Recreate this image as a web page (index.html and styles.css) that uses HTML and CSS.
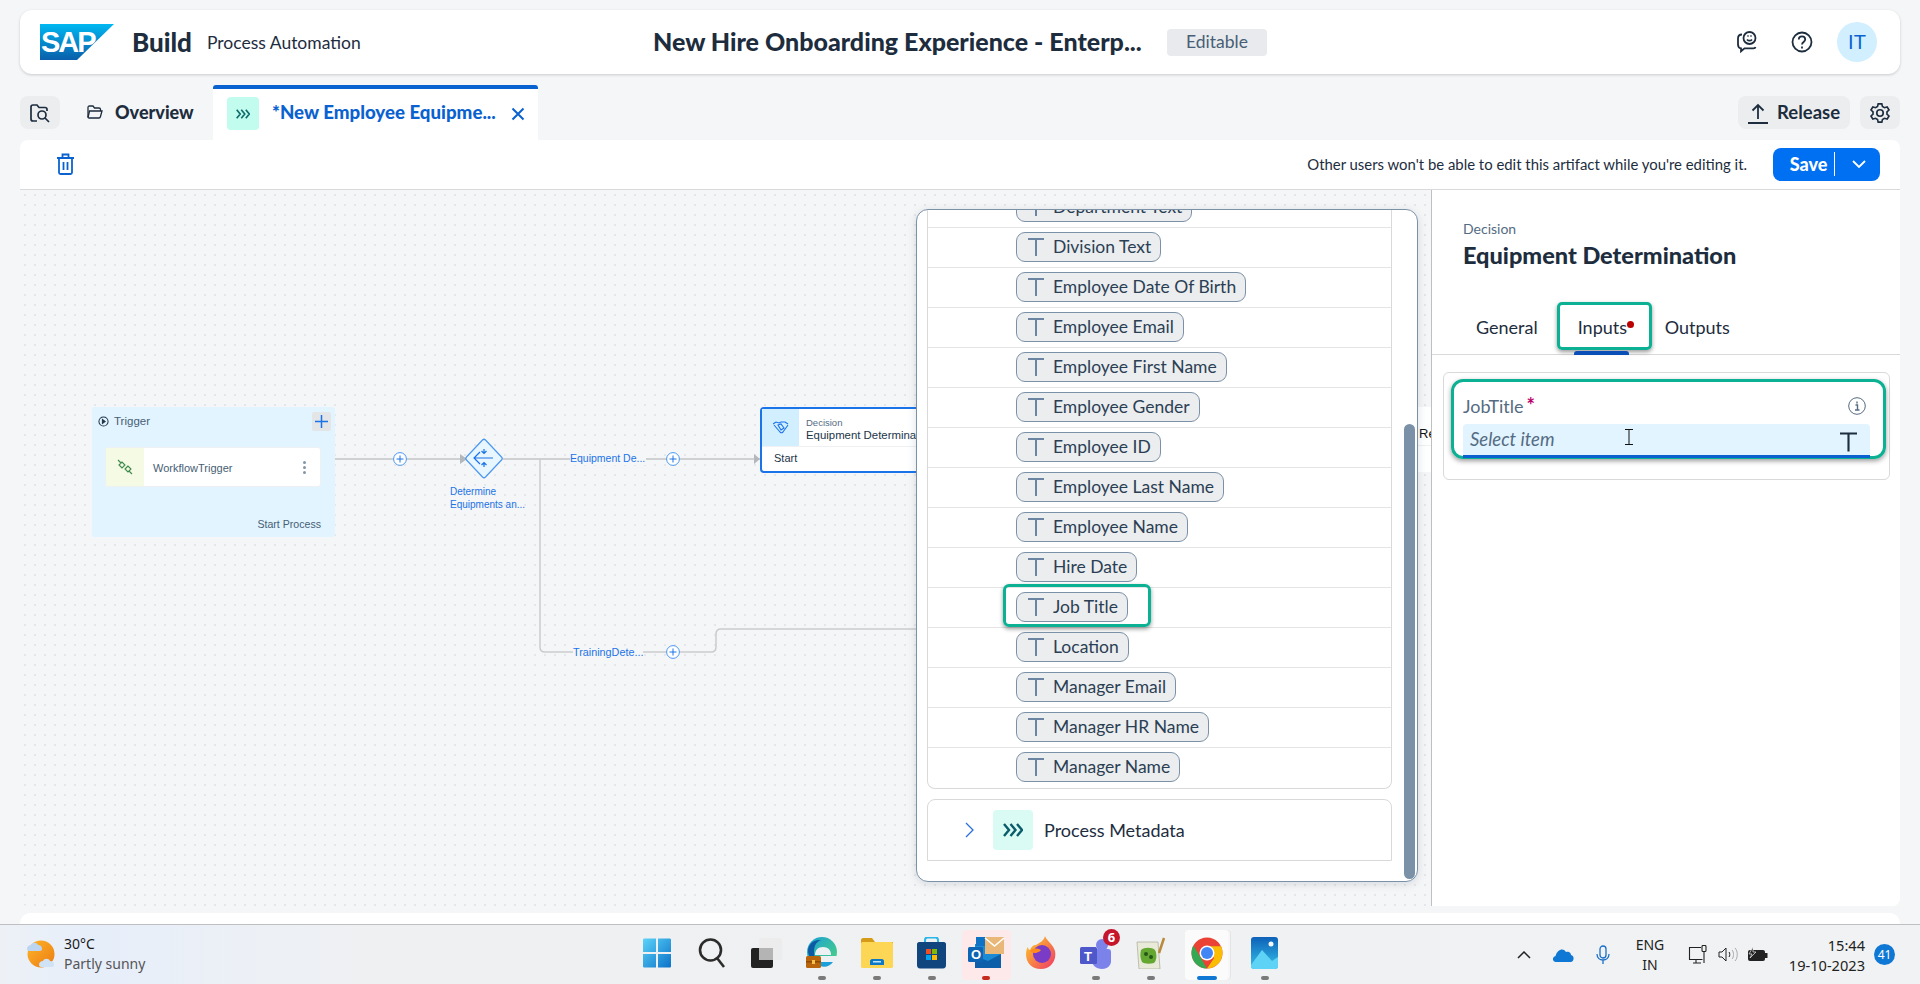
FILE: index.html
```html
<!DOCTYPE html>
<html lang="en">
<head>
    <meta charset="UTF-8">
    <title>SAP Build Process Automation</title>
    <link rel="stylesheet" href="styles.css">
</head>
<body>
    <svg class="defs" width="0" height="0">
        <symbol id="type-t" viewBox="0 0 16 18"><path d="M0 1h16M8 1v17" fill="none" stroke="currentColor" stroke-width="2"/></symbol>
        <symbol id="chevrons" viewBox="0 0 20 14"><path d="M1 1l5 6-5 6M7.500 1l5 6-5 6M14 1l5 6-5 6" fill="none" stroke="currentColor" stroke-width="2.400"/></symbol>
        <symbol id="plus-circle" viewBox="0 0 14 14"><circle cx="7" cy="7" r="6.400" fill="#fff" stroke="#4a97f2" stroke-width="1"/><path d="M3.500 7h7M7 3.500v7" stroke="#1a73e8" stroke-width="1"/></symbol>
    </svg>

    <div class="page">
        <header class="shell">
            <div class="brand">
                <div class="sap-logo"><span>SAP</span></div>
                <span class="brand-build">Build</span>
                <span class="brand-product">Process Automation</span>
            </div>
            <div class="project-title">New Hire Onboarding Experience - Enterp...</div>
            <span class="badge">Editable</span>
            <div class="shell-actions">
                <svg class="shell-icon" viewBox="0 0 24 24" fill="none" stroke="#1d2d3e" stroke-width="1.800">
                    <path d="M7 4.500c-2.500 0-4 1.500-4 4v6c0 2 1 3.500 3 3.800v3l3.500-3h9c1 0 1.800-.4 2-1.300"/>
                    <circle cx="14.500" cy="8" r="6"/>
                    <path d="M12 9.500c1.400 1.600 3.600 1.600 5 0M12.500 6h1M15.500 6h1"/>
                </svg>
                <svg class="shell-icon" viewBox="0 0 24 24" fill="none" stroke="#1d2d3e" stroke-width="1.800">
                    <circle cx="12" cy="12" r="9.500"/>
                    <path d="M8.800 9.500c0-4.200 6.400-4.200 6.400 0 0 2.400-3.200 2.500-3.200 5"/>
                    <path d="M12 16.500v2"/>
                </svg>
                <div class="avatar">IT</div>
            </div>
        </header>

        <nav class="tabbar">
            <button class="square-btn">
                <svg width="22" height="22" viewBox="0 0 22 22" fill="none" stroke="#1d2d3e" stroke-width="1.700">
                    <path d="M8 19H4c-1 0-2-1-2-2V5c0-1 1-2 2-2h4l2 2.500h6c1 0 2 1 2 2V9"/>
                    <circle cx="13" cy="13" r="4"/>
                    <path d="M16 16l4 4"/>
                </svg>
            </button>
            <div class="tab-plain">
                <svg width="16" height="14" viewBox="0 0 16 14" fill="none" stroke="#1d2d3e" stroke-width="1.300">
                    <path d="M1 12V2.500C1 1.500 1.500 1 2.500 1H6l1.500 2H12c1 0 1.500.5 1.500 1.500V6"/>
                    <path d="M1 12.500l1.500-6.500h12.500l-1.500 5.500c-.2.800-.6 1.500-1.500 1.500H2z"/>
                </svg>
                <span>Overview</span>
            </div>
            <div class="tab-active">
                <span class="type-chip"><svg width="14" height="10"><use href="#chevrons"/></svg></span>
                <span class="tab-active-text">*New Employee Equipme...</span>
                <svg class="tab-close" width="14" height="14" viewBox="0 0 14 14" stroke="#0a62d0" stroke-width="2"><path d="M1.500 1.500l11 11M12.500 1.500l-11 11"/></svg>
            </div>
            <div class="tab-actions">
                <button class="release-btn">
                    <svg width="20" height="22" viewBox="0 0 20 22" fill="none" stroke="#1d2d3e" stroke-width="1.800">
                        <path d="M10 17V3M4.500 8.500L10 3l5.500 5.500M0 21h20"/>
                    </svg>
                    <span>Release</span>
                </button>
                <button class="square-btn">
                    <svg width="22" height="24" viewBox="0 0 24 24" fill="none" stroke="#1d2d3e" stroke-width="1.800">
                        <path d="M10 2h4l.7 3 2.100 1.200 3-.9 2 3.400-2.200 2.100v2.400l2.200 2.100-2 3.400-3-.9L14.700 19l-.7 3h-4l-.7-3-2.100-1.200-3 .9-2-3.400 2.200-2.100v-2.400L2.200 8.700l2-3.400 3 .9L9.300 5z"/>
                        <circle cx="12" cy="12" r="3.500"/>
                    </svg>
                </button>
            </div>
        </nav>

        <main class="workspace">
            <div class="toolbar">
                <svg class="trash" width="17" height="22" viewBox="0 0 17 22" fill="none" stroke="#0a62d0" stroke-width="1.800">
                    <path d="M0 5h17M5.500 5V1.500h6V5M2 5v14.500c0 .8.500 1.500 1.500 1.500h10c1 0 1.500-.7 1.500-1.500V5M6.500 9v8M10.500 9v8"/>
                </svg>
                <span class="toolbar-msg">Other users won't be able to edit this artifact while you're editing it.</span>
                <button class="save-btn">
                    <span class="save-label">Save</span>
                    <svg width="14" height="9" viewBox="0 0 14 9" fill="none" stroke="#fff" stroke-width="1.800"><path d="M1 1l6 6 6-6"/></svg>
                </button>
            </div>

            <div class="editor">
                <section class="canvas">
                    <svg class="wires" width="1411" height="716" fill="none">
                        <path d="M315 269h130M483 269h257" stroke="#c2c4c6" stroke-width="1.500"/>
                        <path d="M520 269v188q0 5 5 5h166q5 0 5-5v-13q0-5 5-5h195" stroke="#c9cbcd" stroke-width="1.500"/>
                        <path d="M440 264l7 5-7 5zM734 264l6 5-6 5z" fill="#b4b8bc"/>
                        <path d="M462.500 250q1.500-1.500 3 0l16 17q1.500 1.500 0 3l-16 17q-1.500 1.500-3 0l-16-17q-1.500-1.500 0-3z" fill="#e8f6ff" stroke="#4a97f2" stroke-width="1.200"/>
                        <path d="M454 268h19M460 262l-6 6 6 6M464 259v4M461.500 261l2.500 2.500 2.500-2.500M464 277v-4M461.500 275l2.500-2.500 2.500 2.500" stroke="#1a73e8" stroke-width="1.200"/>
                        <use href="#plus-circle" x="373" y="262" width="14" height="14"/>
                        <use href="#plus-circle" x="646" y="262" width="14" height="14"/>
                        <use href="#plus-circle" x="646" y="455" width="14" height="14"/>
                    </svg>

                    <div class="lane">
                        <div class="lane-head">
                            <svg class="lane-play" width="11" height="11" viewBox="0 0 12 12" fill="none" stroke="#223548" stroke-width="1.100"><circle cx="6" cy="6" r="5"/><path d="M4.800 3.800l3 2.200-3 2.200z" fill="#223548"/></svg>
                            <span class="lane-title">Trigger</span>
                            <span class="lane-plus"><svg width="13" height="13" viewBox="0 0 13 13" stroke="#1a73e8" stroke-width="1.500"><path d="M0 6.500h13M6.500 0v13"/></svg></span>
                        </div>
                        <div class="trigger-card">
                            <div class="trigger-icon">
                                <svg width="16" height="16" viewBox="0 0 16 16" fill="none" stroke="#3d8a4a" stroke-width="1.100">
                                    <path d="M1 1l3 3M12 12l3 3M5 3L2 6l3 3 3-3zM11 7l-3 3 3 3 3-3z"/>
                                </svg>
                            </div>
                            <span class="trigger-name">WorkflowTrigger</span>
                            <span class="kebab"><i></i><i></i><i></i></span>
                        </div>
                        <div class="lane-foot">Start Process</div>
                    </div>

                    <div class="wire-label label-gateway">Determine<br>Equipments an...</div>
                    <div class="wire-label label-equip">Equipment De...</div>
                    <div class="wire-label label-training">TrainingDete...</div>

                    <div class="decision-node">
                        <div class="decision-head">
                            <div class="decision-icon">
                                <svg width="16" height="13" viewBox="0 0 16 13" fill="none" stroke="#1a73e8" stroke-width="1.100">
                                    <path d="M0 3l3-2 3 1 2-1 4 0 3 2M1 4l6 7c1 1 2 1 3 0l5-7M5 4l3-1 3 4-3 2z"/>
                                </svg>
                            </div>
                            <div class="decision-text">
                                <small>Decision</small>
                                <span>Equipment Determination</span>
                            </div>
                        </div>
                        <div class="decision-foot">Start</div>
                    </div>

                    <div class="next-node">
                        <div class="next-head">Re</div>
                    </div>

                    <div class="picker">
                        <div class="field-list">
                            <div class="field-row"><span class="chip"><svg class="chip-t"><use href="#type-t"/></svg>Department Text</span></div>
                            <div class="field-row"><span class="chip"><svg class="chip-t"><use href="#type-t"/></svg>Division Text</span></div>
                            <div class="field-row"><span class="chip"><svg class="chip-t"><use href="#type-t"/></svg>Employee Date Of Birth</span></div>
                            <div class="field-row"><span class="chip"><svg class="chip-t"><use href="#type-t"/></svg>Employee Email</span></div>
                            <div class="field-row"><span class="chip"><svg class="chip-t"><use href="#type-t"/></svg>Employee First Name</span></div>
                            <div class="field-row"><span class="chip"><svg class="chip-t"><use href="#type-t"/></svg>Employee Gender</span></div>
                            <div class="field-row"><span class="chip"><svg class="chip-t"><use href="#type-t"/></svg>Employee ID</span></div>
                            <div class="field-row"><span class="chip"><svg class="chip-t"><use href="#type-t"/></svg>Employee Last Name</span></div>
                            <div class="field-row"><span class="chip"><svg class="chip-t"><use href="#type-t"/></svg>Employee Name</span></div>
                            <div class="field-row"><span class="chip"><svg class="chip-t"><use href="#type-t"/></svg>Hire Date</span></div>
                            <div class="field-row"><span class="chip chip-marked"><svg class="chip-t"><use href="#type-t"/></svg>Job Title</span></div>
                            <div class="field-row"><span class="chip"><svg class="chip-t"><use href="#type-t"/></svg>Location</span></div>
                            <div class="field-row"><span class="chip"><svg class="chip-t"><use href="#type-t"/></svg>Manager Email</span></div>
                            <div class="field-row"><span class="chip"><svg class="chip-t"><use href="#type-t"/></svg>Manager HR Name</span></div>
                            <div class="field-row"><span class="chip"><svg class="chip-t"><use href="#type-t"/></svg>Manager Name</span></div>
                        </div>
                        <div class="meta-row">
                            <svg width="9" height="16" viewBox="0 0 9 16" fill="none" stroke="#2a6fdb" stroke-width="1.300"><path d="M1 1l7 7-7 7"/></svg>
                            <span class="meta-chip"><svg width="20" height="14"><use href="#chevrons"/></svg></span>
                            <span>Process Metadata</span>
                        </div>
                        <div class="picker-scroll"></div>
                    </div>
                </section>

                <aside class="side">
                    <div class="side-head">
                        <small>Decision</small>
                        <h2>Equipment Determination</h2>
                    </div>
                    <div class="side-tabs">
                        <span class="side-tab">General</span>
                        <span class="side-tab side-tab-on">Inputs<i class="red-dot"></i></span>
                        <span class="side-tab">Outputs</span>
                    </div>
                    <div class="input-card">
                        <div class="input-mark">
                            <div class="input-label">
                                <span>JobTitle<b>*</b></span>
                                <svg width="18" height="18" viewBox="0 0 18 18" fill="none" stroke="#556b82" stroke-width="1"><circle cx="9" cy="9" r="8.300"/><path d="M7.500 8h2v5M7 13h4.500M9 4.500v2" stroke-width="1.400"/></svg>
                            </div>
                            <div class="input-box">
                                <span class="placeholder">Select item</span>
                                <svg class="ibeam" width="8" height="16" viewBox="0 0 8 16" fill="none" stroke="#111" stroke-width="1"><path d="M0 .5h8M0 15.500h8M4 .5v15"/></svg>
                                <svg class="input-t" width="17" height="20"><use href="#type-t"/></svg>
                            </div>
                        </div>
                    </div>
                </aside>
            </div>
        </main>
        <div class="strip"></div>
    </div>

    <footer class="taskbar">
        <div class="weather">
            <svg width="32" height="32" viewBox="0 0 32 32">
                <defs>
                    <linearGradient id="sun" x1="0" y1="0" x2="1" y2="1"><stop offset="0" stop-color="#fdb52a"/><stop offset="1" stop-color="#ec7c12"/></linearGradient>
                </defs>
                <circle cx="16" cy="16" r="13.500" fill="url(#sun)"/>
                <path d="M2 11c0-3 2-4 4-4 1-3 6-3 7 0 3 0 4 2 4 4 0 1-1 2-2 2H4c-1 0-2-1-2-2z" fill="#bcd6f2"/>
                <path d="M14 27c0-3 2-4 4-4 1-3 6-3 7 0 3 0 4 2 4 4 0 1-1 2-2 2H16c-1 0-2-1-2-2z" fill="#cfe2f6"/>
            </svg>
            <div class="weather-text"><span>30°C</span><small>Partly sunny</small></div>
        </div>

        <div class="task-icons">
            <span class="task-item">
                <svg width="30" height="30" viewBox="0 0 30 30">
                    <defs><linearGradient id="win" x1="0" y1="0" x2="1" y2="1"><stop offset="0" stop-color="#5cd3f8"/><stop offset="1" stop-color="#0b72c9"/></linearGradient></defs>
                    <path d="M1 2c0-1 .5-1.500 1.500-1.500H14V14H1zM16 .5h11.500c1 0 1.500.5 1.500 1.500V14H16zM1 16h13v13.500H2.500C1.500 29.500 1 29 1 28zM16 16h13v12c0 1-.5 1.500-1.500 1.500H16z" fill="url(#win)"/>
                </svg>
            </span>
            <span class="task-item">
                <svg width="28" height="32" viewBox="0 0 28 32" fill="none" stroke="#2b2b2b" stroke-width="2.600"><circle cx="12.500" cy="13" r="10.500"/><path d="M19 21l7 9"/></svg>
            </span>
            <span class="task-item">
                <svg width="32" height="30" viewBox="0 0 32 30">
                    <rect x="0" y="10" width="22" height="20" rx="2" fill="#222"/>
                    <rect x="8" y="0" width="23" height="22" rx="2" fill="#ececec"/>
                    <rect x="8" y="10" width="14" height="12" fill="#b4b4b4"/>
                </svg>
            </span>
            <span class="task-item task-dot">
                <svg width="31" height="32" viewBox="0 0 31 32">
                    <defs><linearGradient id="edge" x1="0" y1="0" x2="1" y2="1"><stop offset="0" stop-color="#1a9fd8"/><stop offset="1" stop-color="#4fd67a"/></linearGradient></defs>
                    <circle cx="16" cy="15" r="15" fill="url(#edge)"/>
                    <path d="M17 10c6 0 8 4 8 8H9c0-5 3-8 8-8z" fill="#eef1f3"/>
                    <path d="M2 14C2 8 7 2 15 3c-5 2-7 6-7 12 0 4 1 8 4 11-6-2-10-7-10-12z" fill="#0c59a4"/>
                    <path d="M12 19h19c-1 7-8 11-15 11-3 0-4-5-4-11z" fill="#eef1f3"/>
                    <path d="M14 25h13c-3 4-8 6-13 4z" fill="#1a9fd8"/>
                    <rect x="0" y="19" width="15" height="12" rx="1.500" fill="#b8650d"/>
                    <rect x="0" y="24" width="15" height="1.500" fill="#8c4a05"/>
                    <rect x="6" y="23" width="3" height="4" fill="#f5c04d"/>
                </svg>
            </span>
            <span class="task-item task-dot">
                <svg width="32" height="30" viewBox="0 0 32 30">
                    <path d="M0 2c0-1 1-2 2-2h9l3 4h18v6H0z" fill="#d59a16"/>
                    <rect x="0" y="4" width="32" height="26" rx="1.500" fill="#fdd655"/>
                    <path d="M9 27v-4c0-1 1-2 2-2h10c1 0 2 1 2 2v4z" fill="#0f78c6"/>
                    <rect x="12" y="23" width="8" height="1.500" fill="#bfe3fa"/>
                </svg>
            </span>
            <span class="task-item task-dot">
                <svg width="29" height="32" viewBox="0 0 29 32">
                    <path d="M8 5V3c0-1.500 1-2.500 2.500-2.500h8C20 .5 21 1.500 21 3v2" fill="none" stroke="#29b6e8" stroke-width="2"/>
                    <path d="M0 7c0-1 1-2 2-2h25c1 0 2 1 2 2v21c0 2-1 3.500-3 3.500H3c-2 0-3-1.500-3-3.500z" fill="#11457d"/>
                    <rect x="9" y="12" width="5" height="5" fill="#f25022"/><rect x="15" y="12" width="5" height="5" fill="#7fba00"/>
                    <rect x="9" y="18" width="5" height="5" fill="#00a4ef"/><rect x="15" y="18" width="5" height="5" fill="#ffb900"/>
                </svg>
            </span>
            <span class="task-item task-outlook">
                <svg width="36" height="34" viewBox="0 0 36 34">
                    <rect x="7" y="8" width="26" height="24" fill="#1a8ad4"/>
                    <path d="M7 20l13 5 13-7v14H7z" fill="#0c5fa8"/>
                    <rect x="8" y="1" width="11" height="9" fill="#0f72c4"/>
                    <rect x="0" y="11" width="15" height="15" rx="1.500" fill="#0d64b4"/>
                    <text x="3" y="23" class="tb-glyph">O</text>
                    <rect x="17" y="1" width="19" height="17" fill="#e9b878"/>
                    <path d="M17 2l9.500 8L36 2" fill="none" stroke="#fff" stroke-width="1.500"/>
                </svg>
            </span>
            <span class="task-item">
                <svg width="30" height="34" viewBox="0 0 30 34">
                    <defs><linearGradient id="fox" x1="0" y1="0" x2="1" y2="1"><stop offset="0" stop-color="#ffd21e"/><stop offset="1" stop-color="#f0356b"/></linearGradient></defs>
                    <path d="M19 0c1 4 8 8 10 15 2 10-5 18-14 18S0 27 0 18c0-3 1-6 2-7 0 2 1 3 2 3 1-3 3-5 6-5 3-2 8-4 9-9z" fill="url(#fox)"/>
                    <circle cx="16" cy="18" r="9" fill="#7a3bc6"/>
                    <path d="M4 15c3-3 7-3 11-1-1 2-4 2-5 3-2 0-4 0-6-2z" fill="#ff8a1e"/>
                </svg>
            </span>
            <span class="task-item task-dot task-teams">
                <svg width="32" height="32" viewBox="0 0 32 32">
                    <circle cx="22" cy="8" r="6" fill="#7b83eb"/>
                    <path d="M12 12h16c2 0 3 1 3 3v9c0 4-3 8-9 8s-10-4-10-8z" fill="#7b83eb"/>
                    <rect x="0" y="10" width="17" height="17" rx="1.500" fill="#4f58ca"/>
                    <text x="4" y="23.500" class="tb-glyph">T</text>
                </svg>
                <span class="count-badge">6</span>
            </span>
            <span class="task-item task-dot">
                <svg width="30" height="32" viewBox="0 0 30 32">
                    <path d="M1 5h21l2 27H3z" fill="#e9ead8" stroke="#a9aa98" stroke-width=".7"/>
                    <path d="M5 13c3-3 11-3 14 0 2 4 2 10-1 13-4 1-10 1-12-1-2-4-2-8-1-12z" fill="#64a832"/>
                    <circle cx="10" cy="17" r="2" fill="#25551a"/><circle cx="15" cy="20" r="2" fill="#25551a"/>
                    <path d="M23 16L28 1" stroke="#b88a3a" stroke-width="2.500"/>
                </svg>
            </span>
            <span class="task-item task-chrome">
                <svg width="32" height="32" viewBox="0 0 32 32">
                    <circle cx="16" cy="16" r="15.500" fill="#ea4335"/>
                    <path d="M16 31.500C7.500 31.500.5 24.500.5 16c0-3 .8-5.500 2-7.500L11 23z" fill="#34a853"/>
                    <path d="M16 31.500c8.500 0 15.500-7 15.500-15.500 0-2.500-.6-4.700-1.600-6.800H16l7 12z" fill="#fbbc04"/>
                    <circle cx="16" cy="16" r="7.500" fill="#fff"/>
                    <circle cx="16" cy="16" r="6" fill="#4285f4"/>
                </svg>
            </span>
            <span class="task-item task-dot">
                <svg width="27" height="32" viewBox="0 0 27 32">
                    <defs><linearGradient id="pic" x1="0" y1="0" x2="0" y2="1"><stop offset="0" stop-color="#0d61b8"/><stop offset="1" stop-color="#36c1ea"/></linearGradient></defs>
                    <rect x="0" y="0" width="27" height="32" rx="3" fill="url(#pic)"/>
                    <circle cx="20" cy="7" r="2.500" fill="#f2f8fd"/>
                    <path d="M0 28l11-15 10 11 6-4v9c0 2-1 3-3 3H3c-2 0-3-1-3-3z" fill="#5fd3f5"/>
                </svg>
            </span>
        </div>

        <div class="tray">
            <svg width="14" height="8" viewBox="0 0 14 8" fill="none" stroke="#222" stroke-width="1.500"><path d="M1 7l6-6 6 6"/></svg>
            <svg class="tray-cloud" width="21" height="14" viewBox="0 0 21 14"><path d="M3 14c-4 0-4-5-.5-6C4 2 10-1 13 4c4-1 5 2 5 3 4 1 3 7-.5 7z" fill="#0f78d4"/></svg>
            <svg class="tray-mic" width="14" height="20" viewBox="0 0 14 20" fill="none" stroke="#1a6fc9" stroke-width="1.300"><rect x="4" y="1" width="6" height="12" rx="3"/><path d="M1 9c0 8 12 8 12 0M7 15v4"/></svg>
            <div class="tray-lang"><span>ENG</span><span>IN</span></div>
            <svg class="tray-net" width="20" height="20" viewBox="0 0 20 20" fill="none" stroke="#222" stroke-width="1.100"><path d="M13 2.500H1.500v12h13M5 18h8M8 15v3"/><rect x="14" y=".5" width="4" height="6" rx="1"/><path d="M16 6.500V18"/></svg>
            <svg class="tray-vol" width="20" height="15" viewBox="0 0 20 15" fill="none" stroke="#222" stroke-width="1"><path d="M1 5v5h3l4 4V1L4 5z"/><path d="M11 5c1 1 1 4 0 5" /><path d="M14 3c2 2 2 7 0 9M17 1c3 3 3 10 0 13" stroke="#aaa"/></svg>
            <svg class="tray-bat" width="21" height="15" viewBox="0 0 21 15"><rect x="1" y="3" width="17" height="11" rx="2" fill="#222"/><rect x="18" y="6" width="2.500" height="5" fill="#222"/><path d="M6 0L2 7h3l-2 4 6-6H6z" fill="#222" stroke="#f0f1f3" stroke-width=".7"/></svg>
            <div class="tray-clock"><span>15:44</span><span>19-10-2023</span></div>
            <span class="notify">41</span>
        </div>
    </footer>
</body>
</html>
```

FILE: styles.css
```css
* {
    box-sizing: border-box;
}
html, body {
    margin: 0;
    height: 100%;
    overflow: hidden;
}
body {
    display: flex;
    flex-direction: column;
    font-family: Lato, "Noto Sans", sans-serif;
    background-color: #f5f6f7;
    color: #1d2d3e;
}
button {
    font: inherit;
    border: none;
    cursor: pointer;
    color: inherit;
}
.defs {
    position: absolute;
}

.page {
    flex: 1;
    min-height: 0;
    display: flex;
    flex-direction: column;
    padding: 10px 20px 0;
    overflow: hidden;
}

/* shell */
.shell {
    flex: none;
    height: 64px;
    display: flex;
    align-items: center;
    background-color: #fff;
    border-radius: 12px;
    box-shadow: 0 1px 3px rgba(0, 0, 0, .18);
    padding: 0 23px 0 20px;
}
.brand {
    flex: 0 0 613px;
    display: flex;
    align-items: center;
}
.sap-logo {
    width: 74px;
    height: 36px;
    background: linear-gradient(#00b8f1, #0a5fab);
    clip-path: polygon(0 0, 100% 0, 50% 100%, 0 100%);
    display: flex;
    align-items: center;
    font-family: "Liberation Sans", sans-serif;
    font-size: 29px;
    font-weight: bold;
    letter-spacing: -2px;
    color: #fff;
    padding-left: 1px;
}
.brand-build {
    margin-left: 18px;
    font-size: 26px;
    font-weight: 900;
}
.brand-product {
    margin-left: 15px;
    font-size: 17.500px;
}
.project-title {
    width: 490px;
    padding-bottom: 2px;
    font-size: 25px;
    font-weight: 900;
    white-space: nowrap;
}
.badge {
    margin-left: 24px;
    width: 100px;
    height: 27px;
    line-height: 26px;
    text-align: center;
    background-color: #e8eaed;
    color: #475e75;
    border-radius: 4px;
    font-size: 17.500px;
}
.shell-actions {
    margin-left: auto;
    display: flex;
    align-items: center;
    gap: 31px;
}
.shell-icon {
    width: 24px;
    height: 24px;
}
.avatar {
    width: 40px;
    height: 40px;
    border-radius: 50%;
    margin-left: -8px;
    background-color: #d1efff;
    color: #0a62d0;
    text-align: center;
    line-height: 40px;
    font-size: 20px;
    font-family: "Liberation Sans", sans-serif;
}

/* tabs */
.tabbar {
    flex: none;
    height: 55px;
    margin-top: 11px;
    display: flex;
    align-items: flex-start;
}
.square-btn {
    width: 40px;
    height: 33px;
    margin-top: 11px;
    padding: 0;
    display: flex;
    align-items: center;
    justify-content: center;
    border-radius: 8px;
    background-color: #ebedef;
}
.tab-plain {
    margin: 10px 0 0 27px;
    width: 126px;
    height: 33px;
    display: flex;
    align-items: center;
    gap: 12px;
    font-size: 18px;
    font-weight: 900;
}
.tab-active {
    width: 325px;
    height: 55px;
    display: flex;
    align-items: flex-start;
    padding: 8px 13px 0 14px;
    background-color: #fff;
    border-top: 4px solid #0a62d0;
    border-radius: 3px 3px 0 0;
    color: #0a62d0;
}
.type-chip {
    width: 32px;
    height: 33px;
    display: flex;
    align-items: center;
    justify-content: center;
    background-color: #c2fcee;
    border-radius: 4px;
    color: #0f6b6b;
}
.tab-active-text {
    flex: 1;
    margin-left: 13px;
    font-size: 18.700px;
    line-height: 30px;
    font-weight: 900;
    white-space: nowrap;
}
.tab-close {
    margin-top: 10px;
}
.tab-actions {
    margin-left: auto;
    display: flex;
    gap: 10px;
}
.release-btn {
    margin-top: 11px;
    height: 33px;
    width: 112px;
    display: flex;
    align-items: center;
    gap: 9px;
    padding: 0 0 0 10px;
    border-radius: 8px;
    background-color: #ebedef;
    font-size: 18.500px;
    font-weight: 700;
}
.release-btn span {
    margin-top: -2px;
}

/* main panel */
.workspace {
    flex: none;
    height: 766px;
    display: flex;
    flex-direction: column;
    background-color: #fff;
    border-radius: 8px;
    overflow: hidden;
}
.toolbar {
    flex: none;
    height: 50px;
    display: flex;
    align-items: center;
    padding: 0 20px 1px 37px;
    border-bottom: 1px solid #d9d9d9;
}
.toolbar-msg {
    margin-left: auto;
    font-size: 14.900px;
}
.save-btn {
    width: 107px;
    height: 33px;
    margin-left: 26px;
    display: flex;
    align-items: center;
    padding: 0 0 0 10px;
    background-color: #0070f2;
    color: #fff;
    border-radius: 8px;
}
.save-label {
    width: 52px;
    height: 24px;
    line-height: 24px;
    border-right: 1px solid #fff;
    font-size: 18px;
    font-weight: 900;
    margin-right: 17px;
}
.editor {
    flex: 1;
    min-height: 0;
    display: flex;
}

/* canvas */
.canvas {
    position: relative;
    flex: 0 0 1411px;
    overflow: hidden;
    font-family: "Liberation Sans", sans-serif;
    font-size: 11px;
    background-color: #f5f6f7;
    background-image: radial-gradient(#e4e6e9 1px, transparent 1.200px);
    background-size: 10px 10px;
}
.wires {
    position: absolute;
    left: 0;
    top: 0;
}
.lane {
    position: absolute;
    left: 72px;
    top: 217px;
    width: 243px;
    height: 130px;
    display: flex;
    flex-direction: column;
    background-color: #e1f4ff;
    border-radius: 3px;
    color: #475e75;
}
.lane-head {
    display: flex;
    align-items: flex-start;
    height: 40px;
    padding: 5px 4px 0 6px;
    gap: 5px;
}
.lane-play {
    margin-top: 4px;
}
.lane-title {
    font-size: 11.500px;
    line-height: 19px;
}
.lane-plus {
    margin-left: auto;
    width: 19px;
    height: 19px;
    display: flex;
    align-items: center;
    justify-content: center;
    background-color: #e3e5e7;
    border-radius: 2px;
}
.trigger-card {
    margin-left: 13px;
    width: 216px;
    height: 40px;
    display: flex;
    align-items: center;
    background-color: #fff;
    border: 1px solid #eef1f4;
    border-radius: 3px;
}
.trigger-icon {
    width: 38px;
    height: 38px;
    background-color: #f5fae5;
    display: flex;
    align-items: center;
    justify-content: center;
}
.trigger-name {
    margin-left: 9px;
    padding-top: 2px;
    flex: 1;
}
.kebab {
    display: flex;
    flex-direction: column;
    gap: 2px;
    margin-right: 14px;
}
.kebab i {
    width: 3px;
    height: 3px;
    background-color: #8396a8;
    border-radius: 50%;
}
.lane-foot {
    margin-top: auto;
    padding: 0 14px 7px 0;
    font-size: 10.600px;
    text-align: right;
}
.wire-label {
    position: absolute;
    color: #1a73e8;
    line-height: 13px;
    background-color: #f5f6f7;
}
.label-gateway {
    left: 430px;
    top: 295px;
    background: none;
    font-size: 10px;
}
.label-equip {
    left: 550px;
    top: 262px;
    font-size: 10.500px;
    padding-right: 1px;
}
.label-training {
    left: 553px;
    top: 456px;
    font-size: 10.800px;
}
.decision-node {
    position: absolute;
    left: 740px;
    top: 217px;
    width: 300px;
    height: 66px;
    background-color: #fff;
    border: 2px solid #1a73e8;
    border-radius: 4px;
    color: #223548;
}
.decision-head {
    height: 38px;
    display: flex;
    border-bottom: 1px solid #eef0f2;
}
.decision-icon {
    width: 37px;
    background-color: #d1efff;
    display: flex;
    align-items: center;
    justify-content: center;
}
.decision-text {
    display: flex;
    flex-direction: column;
    padding: 7px 0 0 7px;
    line-height: 13px;
    white-space: nowrap;
    font-size: 11.400px;
}
.decision-text small {
    font-size: 9.500px;
    color: #556b82;
}
.decision-foot {
    padding: 5px 0 0 12px;
}
.next-node {
    position: absolute;
    left: 1390px;
    top: 217px;
    width: 40px;
    height: 65px;
    background-color: #fff;
}
.next-head {
    height: 39px;
    padding: 19px 0 0 9px;
    font-size: 13px;
    color: #111;
    border-bottom: 1px solid #eef0f2;
}

/* field picker */
.picker {
    position: absolute;
    left: 896px;
    top: 19px;
    width: 502px;
    height: 673px;
    padding: 0 0 0 10px;
    background-color: #fff;
    border: 1.500px solid #7b91a8;
    border-radius: 12px;
    box-shadow: 0 2px 10px rgba(85, 107, 130, .2);
    overflow: hidden;
    font-family: Lato, "Noto Sans", sans-serif;
}
.field-list {
    width: 465px;
    margin-top: -22px;
    border-left: 1px solid #d9d9d9;
    border-right: 1px solid #d9d9d9;
    border-bottom: 1px solid #d9d9d9;
    border-radius: 0 0 8px 8px;
}
.field-row {
    height: 40px;
    padding: 4px 0 0 88px;
    border-bottom: 1px solid #e5e5e5;
}
.field-row:last-child {
    border-bottom: none;
}
.chip {
    position: relative;
    display: inline-flex;
    align-items: center;
    height: 30px;
    padding: 0 9px 2px 11px;
    background-color: #ebedef;
    border: 1px solid #7b91a8;
    border-radius: 9px;
    font-size: 17.500px;
    color: #2b3f54;
}
.chip-t {
    width: 16px;
    height: 18px;
    margin: 2px 9px 0 0;
    color: #6b84a0;
}
.chip-marked::after {
    content: "";
    position: absolute;
    top: -9px;
    bottom: -6px;
    left: -14px;
    right: -24px;
    border: 3px solid #0cb092;
    border-radius: 6px;
    box-shadow: 0 2px 4px rgba(0, 0, 0, .4);
}
.meta-row {
    width: 465px;
    height: 62px;
    margin-top: 10px;
    display: flex;
    align-items: center;
    padding: 0 0 0 37px;
    border: 1px solid #d9d9d9;
    border-radius: 8px 8px 0 0;
    font-size: 18px;
}
.meta-chip {
    width: 40px;
    height: 40px;
    margin: 0 11px 0 19px;
    display: flex;
    align-items: center;
    justify-content: center;
    background-color: #d9fbf3;
    border-radius: 4px;
    color: #0a5b6b;
}
.picker-scroll {
    position: absolute;
    right: 2px;
    top: 214px;
    width: 11px;
    height: 455px;
    background-color: #7b91a8;
    border-radius: 6px;
}

/* side panel */
.side {
    flex: 1;
    border-left: 1px solid #bdbfc2;
    background-color: #fff;
}
.side-head {
    height: 77px;
    padding: 30px 0 0 31px;
}
.side-head small {
    display: block;
    font-size: 14px;
    color: #556b82;
}
.side-head h2 {
    margin: 4px 0 0;
    font-size: 23.500px;
    font-weight: 900;
}
.side-tabs {
    height: 88px;
    display: flex;
    align-items: flex-start;
    padding: 35px 0 0 44px;
    border-bottom: 1px solid #d9d9d9;
    font-size: 18px;
}
.side-tab {
    height: 48px;
    line-height: 50px;
    margin-right: 19px;
}
.side-tab-on {
    position: relative;
    width: 95px;
    margin-right: 13px;
    padding-left: 18px;
    line-height: 44px;
    border: 3px solid #0cb092;
    border-radius: 5px;
    box-shadow: 0 2px 4px rgba(0, 0, 0, .4);
}
.side-tab-on::after {
    content: "";
    position: absolute;
    left: 14px;
    bottom: -8px;
    width: 55px;
    height: 4px;
    border-radius: 3px 3px 0 0;
    background-color: #0a4fb8;
}
.red-dot {
    position: absolute;
    left: 67px;
    top: 16px;
    width: 7px;
    height: 7px;
    border-radius: 50%;
    background-color: #b00;
}
.input-card {
    margin: 17px 10px 0 11px;
    height: 108px;
    padding: 6px 3px 0 7px;
    border: 1px solid #d9d9d9;
    border-radius: 6px;
}
.input-mark {
    height: 80px;
    border: 3px solid #0cb092;
    border-radius: 12px;
    box-shadow: 0 2px 5px rgba(0, 0, 0, .4);
    padding: 0 13px 0 9px;
}
.input-label {
    height: 42px;
    display: flex;
    align-items: center;
    justify-content: space-between;
    color: #556b82;
    font-size: 18px;
    padding: 5px 4px 0 0;
}
.input-label b {
    color: #bb0066;
    margin-left: 3px;
    font-size: 20px;
    line-height: 18px;
}
.input-box {
    position: relative;
    height: 34px;
    display: flex;
    align-items: center;
    justify-content: space-between;
    padding: 0 13px 0 7px;
    background-color: #e1f4ff;
    border-bottom: 3px solid #0a62d0;
    border-radius: 4px 4px 0 0;
}
.placeholder {
    font-style: italic;
    font-size: 18.500px;
    color: #556b82;
    margin-top: -2px;
}
.ibeam {
    position: absolute;
    left: 162px;
    top: 5px;
}
.input-t {
    color: #1d2d3e;
    margin-top: 4px;
}

.strip {
    flex: none;
    height: 30px;
    margin-top: 7px;
    background-color: #fff;
    border-radius: 10px 10px 0 0;
}

/* windows taskbar */
.taskbar {
    flex: none;
    position: relative;
    height: 60px;
    display: flex;
    align-items: center;
    border-top: 1px solid #bdbfc0;
    background: linear-gradient(90deg, #edf1f6 0, #e6eefa 90px, #ecf0f6 240px, #eff0f1 400px, #f1f2f3 100%);
    font-family: "Noto Sans", sans-serif;
}
.weather {
    display: flex;
    align-items: center;
    gap: 7px;
    margin: -2px 0 0 25px;
}
.weather-text {
    display: flex;
    flex-direction: column;
    font-size: 14px;
    line-height: 20px;
    color: #1a1a1a;
}
.weather-text small {
    font-size: 14px;
    color: #555;
}
.task-icons {
    position: absolute;
    left: 629px;
    top: 0;
    display: flex;
    align-items: center;
    height: 59px;
}
.task-item {
    position: relative;
    width: 55px;
    height: 59px;
    display: flex;
    align-items: center;
    justify-content: center;
    padding-bottom: 4px;
}
.task-dot::after,
.task-outlook::after,
.task-chrome::after {
    content: "";
    position: absolute;
    left: 50%;
    bottom: 4px;
    width: 8px;
    height: 4px;
    margin-left: -4px;
    border-radius: 2px;
    background-color: #7a7a7a;
}
.task-outlook {
    width: 49px;
    height: 50px;
    margin: 0 2.500px;
    background-color: #fde9e9;
    border-radius: 4px;
}
.task-outlook::after {
    bottom: 0;
    background-color: #c42b1c;
}
.task-chrome {
    width: 43px;
    height: 50px;
    margin: 0 9px 0 7px;
    background-color: #fbfbfb;
    border-radius: 4px;
    box-shadow: 2px 0 0 #f7f7f7, 3px 0 0 #e4e4e4;
}
.task-chrome::after {
    bottom: 0;
    width: 20px;
    margin-left: -10px;
    background-color: #0f78d4;
}
.tb-glyph {
    font: bold 13px "Liberation Sans", sans-serif;
    fill: #fff;
}
.count-badge {
    position: absolute;
    right: 3px;
    top: 4px;
    width: 17px;
    height: 17px;
    border-radius: 50%;
    background-color: #c5162c;
    color: #fff;
    text-align: center;
    font-size: 13px;
    line-height: 17px;
    font-weight: 700;
}
.tray {
    margin-left: auto;
    padding-right: 25px;
    display: flex;
    align-items: center;
    color: #222;
    font-size: 14px;
}
.tray-cloud {
    margin-left: 22px;
}
.tray-mic {
    margin-left: 22px;
}
.tray-lang {
    margin-left: 23px;
    display: flex;
    flex-direction: column;
    align-items: center;
    line-height: 20px;
    width: 34px;
}
.tray-net {
    margin-left: 21px;
}
.tray-vol {
    margin-left: 10px;
}
.tray-bat {
    margin-left: 9px;
}
.tray-clock {
    margin-left: 16px;
    display: flex;
    flex-direction: column;
    align-items: flex-end;
    line-height: 20px;
    width: 81px;
    font-size: 14.600px;
}
.notify {
    margin-left: 9px;
    width: 21px;
    height: 21px;
    border-radius: 50%;
    background-color: #0f78d4;
    color: #fff;
    text-align: center;
    font-size: 12px;
    line-height: 21px;
}
```
